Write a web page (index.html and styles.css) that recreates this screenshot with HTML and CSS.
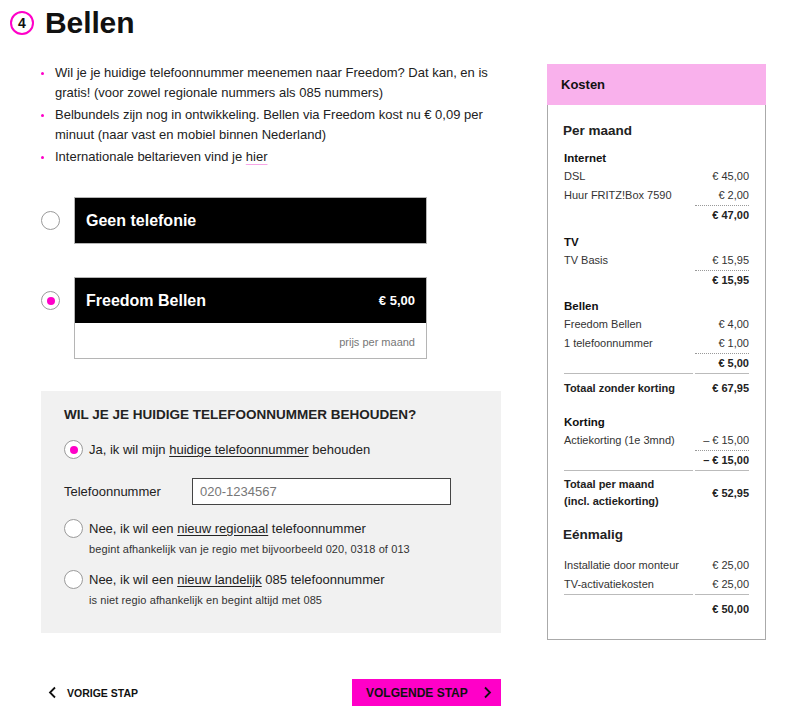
FILE: index.html
```html
<!DOCTYPE html>
<html lang="nl">
<head>
<meta charset="utf-8">
<link rel="stylesheet" href="styles.css">
</head>
<body>
<header class="page-head">
  <span class="step">4</span>
  <h1>Bellen</h1>
</header>
<div class="layout">
  <main class="left">
    <ul class="info">
      <li>Wil je je huidige telefoonnummer meenemen naar Freedom? Dat kan, en is gratis! (voor zowel regionale nummers als 085 nummers)</li>
      <li>Belbundels zijn nog in ontwikkeling. Bellen via Freedom kost nu € 0,09 per minuut (naar vast en mobiel binnen Nederland)</li>
      <li>Internationale beltarieven vind je <span class="hier">hier</span></li>
    </ul>

    <div class="option opt1">
      <span class="radio"></span>
      <div class="card">
        <div class="card-head"><span>Geen telefonie</span></div>
      </div>
    </div>

    <div class="option opt2">
      <span class="radio checked"></span>
      <div class="card">
        <div class="card-head"><span>Freedom Bellen</span><span class="price">€ 5,00</span></div>
        <div class="card-foot">prijs per maand</div>
      </div>
    </div>

    <section class="panel">
      <h2>Wil je je huidige telefoonnummer behouden?</h2>
      <div class="choice c1">
        <span class="radio checked"></span>
        <div class="choice-text">Ja, ik wil mijn <u>huidige telefoonnummer</u> behouden</div>
      </div>
      <div class="phone-row">
        <label>Telefoonnummer</label>
        <div class="input">020-1234567</div>
      </div>
      <div class="choice c2">
        <span class="radio"></span>
        <div class="choice-text">Nee, ik wil een <u>nieuw regionaal</u> telefoonnummer
          <div class="hint">begint afhankelijk van je regio met bijvoorbeeld 020, 0318 of 013</div>
        </div>
      </div>
      <div class="choice c3">
        <span class="radio"></span>
        <div class="choice-text">Nee, ik wil een <u>nieuw landelijk</u> 085 telefoonnummer
          <div class="hint">is niet regio afhankelijk en begint altijd met 085</div>
        </div>
      </div>
    </section>

    <nav class="steps">
      <a class="prev"><svg width="9" height="13" viewBox="0 0 9 13"><path d="M7 1.5 L2 6.5 L7 11.5" fill="none" stroke="#111" stroke-width="1.8"/></svg>VORIGE STAP</a>
      <a class="next">VOLGENDE STAP<svg width="9" height="13" viewBox="0 0 9 13"><path d="M2 1.5 L7 6.5 L2 11.5" fill="none" stroke="#111" stroke-width="1.8"/></svg></a>
    </nav>
  </main>

  <aside class="costs">
    <div class="costs-head">Kosten</div>
    <div class="costs-body">
      <h3>Per maand</h3>
      <div class="grp g1">
        <div class="gt">Internet</div>
        <div class="row"><span>DSL</span><span class="v">€ 45,00</span></div>
        <div class="row"><span>Huur FRITZ!Box 7590</span><span class="v">€ 2,00</span></div>
        <div class="row subtotal"><span></span><span class="v">€ 47,00</span></div>
      </div>
      <div class="grp g2">
        <div class="gt">TV</div>
        <div class="row"><span>TV Basis</span><span class="v">€ 15,95</span></div>
        <div class="row subtotal"><span></span><span class="v">€ 15,95</span></div>
      </div>
      <div class="grp g3">
        <div class="gt">Bellen</div>
        <div class="row"><span>Freedom Bellen</span><span class="v">€ 4,00</span></div>
        <div class="row"><span>1 telefoonnummer</span><span class="v">€ 1,00</span></div>
        <div class="row subtotal"><span></span><span class="v">€ 5,00</span></div>
      </div>
      <div class="rule"><span></span><span></span></div>
      <div class="row total"><span>Totaal zonder korting</span><span class="v">€ 67,95</span></div>
      <div class="grp korting">
        <div class="gt">Korting</div>
        <div class="row"><span>Actiekorting (1e 3mnd)</span><span class="v">– € 15,00</span></div>
        <div class="row subtotal"><span></span><span class="v">– € 15,00</span></div>
      </div>
      <div class="rule"><span></span><span></span></div>
      <div class="row total two"><span>Totaal per maand<br>(incl. actiekorting)</span><span class="v">€ 52,95</span></div>
      <h3 class="once">Eénmalig</h3>
      <div class="row"><span>Installatie door monteur</span><span class="v">€ 25,00</span></div>
      <div class="row"><span>TV-activatiekosten</span><span class="v">€ 25,00</span></div>
      <div class="rule"><span></span><span></span></div>
      <div class="row total last"><span></span><span class="v">€ 50,00</span></div>
    </div>
  </aside>
</div>
</body>
</html>
```

FILE: styles.css
```css
* { box-sizing: border-box; }
html, body { margin: 0; padding: 0; background: #fff; }
body {
  font-family: "Liberation Sans", Arial, sans-serif;
  color: #222;
  width: 800px;
  height: 721px;
  overflow: hidden;
}

.page-head {
  display: flex;
  align-items: center;
  height: 44px;
  padding: 2px 0 0 10px;
}
.step {
  width: 24px;
  height: 24px;
  border: 2px solid #ff00c8;
  border-radius: 50%;
  display: flex;
  align-items: center;
  justify-content: center;
  font-size: 14px;
  font-weight: 700;
  color: #111;
  margin-right: 11px;
}
.page-head h1 {
  margin: 0;
  font-size: 30px;
  font-weight: 700;
  color: #111;
  letter-spacing: -0.1px;
}

.layout {
  display: flex;
  padding-left: 41px;
  margin-top: 20px;
  gap: 46px;
}
.left { width: 460px; }

.info {
  list-style: none;
  margin: -1px 0 0 0;
  padding: 0;
  font-size: 13px;
  line-height: 20px;
  color: #222;
}
.info li {
  position: relative;
  padding-left: 14px;
  margin-bottom: 2px;
}
.info li::before {
  content: "";
  position: absolute;
  left: 0;
  top: 9px;
  width: 3px;
  height: 3px;
  border-radius: 50%;
  background: #ff00c8;
}
.hier {
  text-decoration: underline;
  text-decoration-color: #f7a6e6;
  text-underline-offset: 3px;
}

.option {
  display: flex;
  align-items: flex-start;
  width: 386px;
}
.opt1 { margin-top: 30px; }
.opt2 { margin-top: 33px; }
.option > .radio { margin-top: 14px; margin-right: 14px; flex: none; }

.radio {
  display: inline-block;
  width: 19px;
  height: 19px;
  border: 1px solid #9a9a9a;
  border-radius: 50%;
  background: #fff;
  position: relative;
}
.radio.checked::after {
  content: "";
  position: absolute;
  left: 4.5px;
  top: 4.5px;
  width: 8px;
  height: 8px;
  border-radius: 50%;
  background: #ff00c8;
}

.card {
  flex: 1;
  border: 1px solid #b5b5b5;
}
.card-head {
  background: #000;
  color: #fff;
  height: 45px;
  display: flex;
  align-items: center;
  justify-content: space-between;
  padding: 0 11px;
  font-size: 16px;
  font-weight: 700;
}
.card-head .price { font-size: 13px; }
.card-foot {
  height: 35px;
  display: flex;
  align-items: center;
  justify-content: flex-end;
  padding: 2px 11px 0;
  font-size: 11px;
  color: #777;
  background: #fff;
}

.panel {
  margin-top: 32px;
  background: #f1f1f1;
  height: 242px;
  padding: 15px 23px 0;
}
.panel h2 {
  margin: 0;
  font-size: 13.5px;
  line-height: 18px;
  font-weight: 700;
  text-transform: uppercase;
  color: #222;
}
.choice {
  display: flex;
  align-items: flex-start;
  font-size: 13px;
  line-height: 18px;
  color: #222;
}
.choice .radio { margin-right: 6px; flex: none; margin-top: -1px; }
.choice u { text-underline-offset: 2px; }
.c1 { margin-top: 17px; }
.c2 { margin-top: 15px; }
.c3 { margin-top: 15px; }
.hint {
  font-size: 11px;
  line-height: 14px;
  margin-top: 4px;
  color: #333;
  letter-spacing: 0.1px;
}
.phone-row {
  display: flex;
  align-items: center;
  margin-top: 19px;
  font-size: 13px;
  color: #222;
}
.phone-row label { width: 128px; }
.input {
  width: 259px;
  height: 27px;
  border: 1px solid #444;
  background: #fff;
  display: flex;
  align-items: center;
  padding-left: 7px;
  color: #777;
  font-size: 13px;
}

.steps {
  display: flex;
  justify-content: space-between;
  align-items: center;
  margin-top: 46px;
}
.steps a {
  display: flex;
  align-items: center;
  font-weight: 700;
  color: #111;
  text-decoration: none;
}
.prev { padding-left: 7px; font-size: 10.5px; }
.prev svg { margin-right: 10px; }
.next {
  background: #ff00c8;
  width: 149px;
  height: 27px;
  padding: 0 9px 0 14px;
  justify-content: space-between;
  font-size: 12px;
}

.costs {
  width: 219px;
}
.costs-head {
  background: #f9b1ec;
  height: 41px;
  display: flex;
  align-items: center;
  padding-left: 14px;
  font-size: 13px;
  font-weight: 700;
  color: #111;
}
.costs-body {
  border: 1px solid #aaa;
  border-top: none;
  padding: 17px 16px 0 15px;
  height: 535px;
  font-size: 11px;
  color: #333;
}
.costs-body h3 {
  margin: 0;
  font-size: 13.5px;
  line-height: 18px;
  height: 18px;
  font-weight: 700;
  color: #222;
}
.grp { padding-left: 1px; }
.g1 { margin-top: 9px; }
.g2 { margin-top: 8px; }
.g3 { margin-top: 7px; }
.gt {
  font-weight: 700;
  font-size: 11.5px;
  line-height: 18px;
  height: 18px;
  color: #111;
}
.row {
  display: flex;
  justify-content: space-between;
  align-items: center;
  line-height: 19px;
  height: 19px;
}
.row .v {
  width: 54px;
  text-align: right;
  flex: none;
  height: 19px;
}
.row.subtotal { height: 20px; align-items: flex-start; }
.row.subtotal .v {
  border-top: 1px dotted #999;
  height: 20px;
  font-weight: 700;
  color: #222;
}
.rule {
  display: flex;
  gap: 2px;
  padding-left: 1px;
  height: 1px;
}
.rule span {
  height: 1px;
  background: #bbb;
  flex: 1;
}
.rule span:last-child { flex: none; width: 54px; }
.row.total {
  font-weight: 700;
  color: #222;
  padding-top: 5px;
  height: 23px;
  line-height: 18px;
}
.row.total .v { font-weight: 700; height: 18px; line-height: 18px; }
.row.two { line-height: 17px; padding-top: 5px; height: 39px; }
.korting { margin-top: 16px; }
h3.once { margin-top: 16px; margin-bottom: 12px; }
.costs-body > .row { padding-left: 1px; }
```
